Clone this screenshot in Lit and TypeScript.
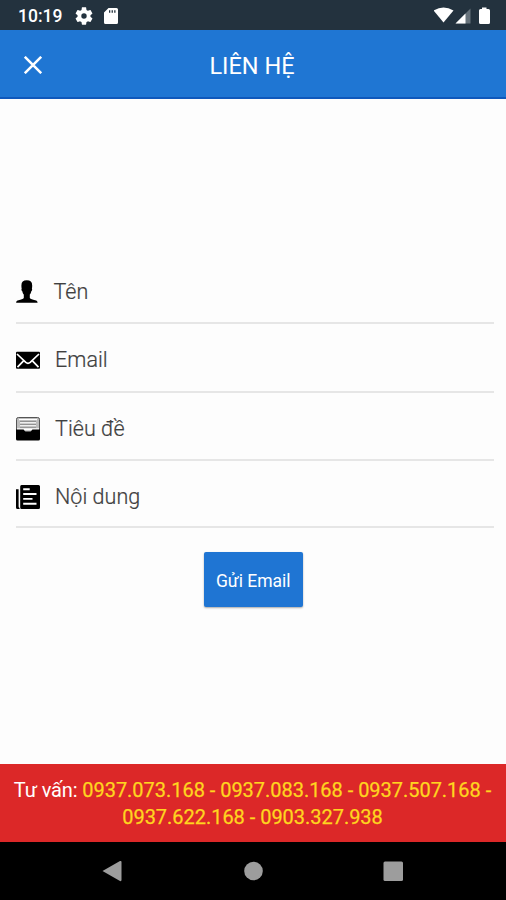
import { LitElement, html, css, svg, type SVGTemplateResult } from "lit";
import { customElement, property } from "lit/decorators.js";

const fieldIcons: Record<string, SVGTemplateResult> = {
  person: svg`<path d="M10.800 .3c3.600 0 5.400 1.700 5.400 5.100 0 1.400-.1 2.300-.3 3.300.5.200.3 1.900-.6 2.600-.3 1.700-.8 2.500-1.500 3.300v3.400c.7 1.200 2.900 1.600 5.300 2.200 1.600.4 2.400 1 2.500 2.500H.1c.1-1.500.9-2.100 2.500-2.500 2.400-.6 4.500-1 5.200-2.200v-3.400c-.7-.8-1.200-1.600-1.500-3.300-.9-.7-1.100-2.400-.6-2.600-.2-1-.3-1.900-.3-3.300 0-3.400 1.800-5.100 5.400-5.100z"/>`,
  mail: svg`<rect x="0" y="3.800" width="24" height="17" rx="1"/><path fill="none" stroke="#fff" stroke-width="1.700" d="M1 6 L9.800 14.400 Q12 16.200 14.200 14.400 L23 6 M1.500 19.200 L7.300 13.200 M22.500 19.200 L16.700 13.200"/>`,
  tray: svg`<rect x=".5" y=".5" width="23" height="22" rx="1.800" fill="#bdbdbd" stroke="#555"/><path stroke="#fff" stroke-width="1.200" d="M3 2.700h18M4 5.800h16M4 8.800h16"/><path stroke="#888" d="M4 4.300h16M4 7.300h16M4 10.200h16"/><path fill="#fff" d="M1 11.300h22v2H1z"/><path d="M0 12.500h7.300c1 0 1 1.900 2.200 1.900h5c1.200 0 1.200-1.900 2.200-1.900H24V22q0 1.500-1.500 1.500h-21Q0 23.500 0 22z"/>`,
  news: svg`<path d="M5.500 0h17Q24 0 24 1.500v21Q24 24 22.500 24H5.500Q4.200 24 4.200 22.500v-21Q4.200 0 5.500 0zM0 4.200h2.600V21.500c0 .7.400 1.200 1 1.400V24H1.500Q0 24 0 22.500z"/><path stroke="#fff" stroke-width="1.900" fill="none" d="M7.200 4.300h6.500M7.200 9h13.300M7.200 13.900h9.300M7.200 18.800h13.300"/>`,
};

@customElement("contact-field")
export class ContactField extends LitElement {
  @property() icon = "";
  @property() label = "";

  static styles = css`
    :host { display: flex; align-items: center; box-sizing: border-box; border-bottom: 2px solid #e6e6e6; }
    .icon { width: 24px; height: 24px; flex: none; }
    .label { margin-left: 15.500px; font: 300 21.500px/28px Roboto, sans-serif; color: #404040; letter-spacing: 0.050px; -webkit-text-stroke: 0.200px #404040; }
    :host([icon="person"]) .label { margin-left: 14px; }
  `;

  render() {
    return html`<svg class="icon" viewBox="0 0 24 24">${fieldIcons[this.icon]}</svg><span class="label">${this.label}</span>`;
  }
}

@customElement("app-root")
export class AppRoot extends LitElement {
  static styles = css`
    :host { display: flex; flex-direction: column; width: 506px; height: 900px; background: #fdfdfd; font-family: Roboto, sans-serif; overflow: hidden; }
    .status { height: 30px; flex: none; background: #23323e; display: flex; align-items: center; box-sizing: border-box; padding: 2px 14px 0 18px; color: #fff; }
    .clock { font-size: 17.500px; font-weight: 500; line-height: 20px; width: 57px; }
    .gear { width: 18px; height: 18px; margin-right: 11px; fill: #fff; }
    .card { width: 14px; height: 16px; fill: #fff; }
    .signals { margin-left: auto; width: 58px; height: 20px; }
    .bar { height: 69px; flex: none; box-sizing: border-box; background: #1f76d3; border-bottom: 2px solid #0f58bb; display: grid; grid-template-columns: 64px 1fr 64px; align-items: center; color: #fff; padding-top: 3px; }
    .close { width: 18px; height: 18px; margin-left: 23.500px; }
    .title { text-align: center; font-size: 23.500px; line-height: 30px; margin: 1px 0 0 -2px; font-weight: 400; }
    .body { flex: 1; display: flex; flex-direction: column; padding: 162px 12px 0 15.500px; }
    .f1 { height: 63px; padding-top: 0; }
    .f2, .f3 { height: 68.500px; padding-top: 6px; }
    .f4 { height: 67px; padding-top: 6px; }
    .send { align-self: center; margin: 23.500px 3px 0 0; width: 99px; height: 55px; border: 0; border-radius: 2px; padding: 3px 0 0; background: #1f75d3; color: #fff; font: 400 17.500px Roboto, sans-serif; box-shadow: 0 1px 2px #0005; }
    .hotline { height: 78px; flex: none; box-sizing: border-box; background: #dc2828; color: #fff; text-align: center; font-size: 20px; line-height: 27px; padding: 12.500px 1px 0 0; white-space: nowrap; }
    .lead { letter-spacing: -0.150px; }
    .numbers { color: #ffd51f; letter-spacing: -0.030px; -webkit-text-stroke: 0.250px #ffd51f; }
    .nav { height: 58px; flex: none; background: #000; display: flex; }
    .nav svg { width: 506px; height: 58px; }
  `;

  render() {
    return html`
      <div class="status">
        <span class="clock">10:19</span>
        <svg class="gear" viewBox="2 2 20 20"><path d="M19.140 12.940c.04-.3.060-.61.060-.94 0-.32-.02-.64-.07-.94l2.030-1.580c.18-.14.230-.41.120-.61l-1.920-3.320c-.12-.22-.37-.29-.59-.22l-2.390.96c-.5-.38-1.030-.7-1.620-.94l-.36-2.540c-.04-.24-.24-.41-.48-.41h-3.840c-.24 0-.43.17-.47.410l-.36 2.540c-.59.240-1.130.570-1.620.940l-2.390-.96c-.22-.08-.47 0-.59.220L2.740 8.870c-.12.210-.08.470.120.610l2.030 1.580c-.05.300-.09.630-.09.940s.02.640.070.940l-2.030 1.580c-.18.140-.23.410-.12.610l1.920 3.320c.12.220.37.290.59.220l2.390-.96c.5.380 1.030.7 1.620.940l.36 2.540c.05.240.24.410.48.410h3.840c.24 0 .44-.17.470-.41l.36-2.540c.59-.24 1.130-.56 1.620-.94l2.390.96c.22.080.47 0 .59-.22l1.920-3.320c.12-.22.070-.47-.12-.61zM12 15a3 3 0 1 1 0-6 3 3 0 0 1 0 6z"/></svg>
        <svg class="card" viewBox="0 0 14 16"><path fill-rule="evenodd" d="M4.500 0h8Q14 0 14 1.500v13Q14 16 12.500 16h-11Q0 16 0 14.500V4.500zM5 2.200v2.600h1.300V2.200zM7.600 2.200v2.600h1.300V2.200zM10.200 2.200v2.600h1.300V2.200z"/></svg>
        <svg class="signals" viewBox="434 5 58 20">
          <path fill="#fff" d="M433.500 9.500Q443.500 3.500 453.500 9.500L443.500 21.500z"/>
          <path fill="#66727b" d="M470.500 7.500V22.500H455.500z"/>
          <path fill="#fff" d="M465.500 12.500V22.500H455.500z"/>
          <path fill="#fff" d="M482 6.500h4.500V8h2Q490 8 490 9.500v12Q490 23 488.500 23h-8Q479 23 479 21.500v-12Q479 8 480.500 8H482z"/>
        </svg>
      </div>
      <div class="bar">
        <svg class="close" viewBox="0 0 18 18"><path stroke="#fff" stroke-width="2.500" d="M.8 .8l16.400 16.400M17.200 .8L.8 17.200"/></svg>
        <span class="title">LIÊN HỆ</span>
      </div>
      <div class="body">
        <contact-field class="f1" icon="person" label="Tên"></contact-field>
        <contact-field class="f2" icon="mail" label="Email"></contact-field>
        <contact-field class="f3" icon="tray" label="Tiêu đề"></contact-field>
        <contact-field class="f4" icon="news" label="Nội dung"></contact-field>
        <button class="send">Gửi Email</button>
      </div>
      <div class="hotline">
        <span class="lead">Tư vấn: </span><span class="numbers">0937.073.168 - 0937.083.168 - 0937.507.168 -<br />0937.622.168 - 0903.327.938</span>
      </div>
      <div class="nav">
        <svg viewBox="0 842 506 58" fill="#9d9d9d"><path d="M102.500 871L120 861q1.500-.5 1.500 1v18q0 1.500-1.500 1z"/><circle cx="253.500" cy="871" r="9.300"/><rect x="383.500" y="861.500" width="19.500" height="19.500" rx="1.500"/></svg>
      </div>
    `;
  }
}
